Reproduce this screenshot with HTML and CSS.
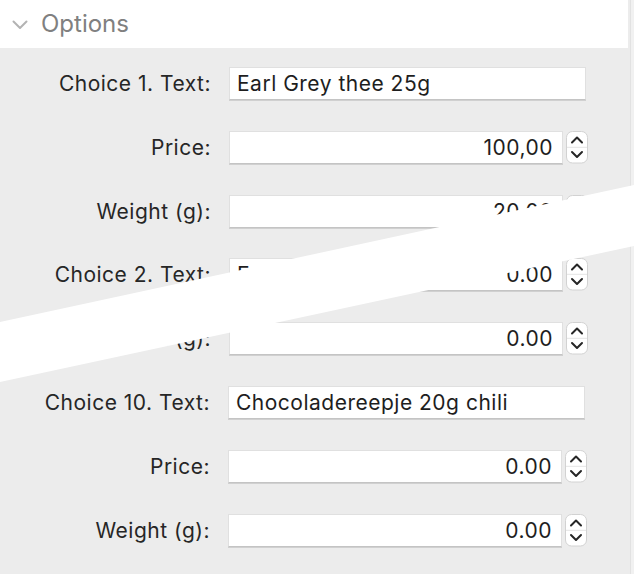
FILE: index.html
```html
<!DOCTYPE html>
<html>
<head>
<meta charset="utf-8">
<link rel="stylesheet" href="styles.css">
</head>
<body>
<div class="window">
  <div class="header">
    <svg class="chev" width="16" height="10" viewBox="0 0 16 10"><polyline points="1.5,1.5 8,8 14.5,1.5" fill="none" stroke="#b3b3b3" stroke-width="2" stroke-linecap="round" stroke-linejoin="round"/></svg>
    <span class="title">Options</span>
  </div>
  <div class="panel">
    <div class="row">
      <span class="lbl">Choice 1. Text:</span>
      <div class="field text">Earl Grey thee 25g</div>
    </div>
    <div class="row">
      <span class="lbl">Price:</span>
      <div class="field num">100,00</div>
      <div class="stepper"><svg width="22" height="33" viewBox="0 0 22 33"><rect x="0.5" y="0.5" width="21" height="31.5" rx="6" fill="#fff" stroke="#d2d2d2"/><line x1="1" y1="16.3" x2="21" y2="16.3" stroke="#e4e4e4"/><polyline points="6,11.5 11,6.5 16,11.5" fill="none" stroke="#262626" stroke-width="2" stroke-linecap="round" stroke-linejoin="round"/><polyline points="6,21 11,26 16,21" fill="none" stroke="#262626" stroke-width="2" stroke-linecap="round" stroke-linejoin="round"/></svg></div>
    </div>
    <div class="row">
      <span class="lbl">Weight (g):</span>
      <div class="field num">20,00</div>
      <div class="stepper"><svg width="22" height="33" viewBox="0 0 22 33"><rect x="0.5" y="0.5" width="21" height="31.5" rx="6" fill="#fff" stroke="#d2d2d2"/><line x1="1" y1="16.3" x2="21" y2="16.3" stroke="#e4e4e4"/><polyline points="6,11.5 11,6.5 16,11.5" fill="none" stroke="#262626" stroke-width="2" stroke-linecap="round" stroke-linejoin="round"/><polyline points="6,21 11,26 16,21" fill="none" stroke="#262626" stroke-width="2" stroke-linecap="round" stroke-linejoin="round"/></svg></div>
    </div>
    <div class="row">
      <span class="lbl">Choice 2. Text:</span>
      <div class="field num split"><span>E</span><span>0.00</span></div>
      <div class="stepper"><svg width="22" height="33" viewBox="0 0 22 33"><rect x="0.5" y="0.5" width="21" height="31.5" rx="6" fill="#fff" stroke="#d2d2d2"/><line x1="1" y1="16.3" x2="21" y2="16.3" stroke="#e4e4e4"/><polyline points="6,11.5 11,6.5 16,11.5" fill="none" stroke="#262626" stroke-width="2" stroke-linecap="round" stroke-linejoin="round"/><polyline points="6,21 11,26 16,21" fill="none" stroke="#262626" stroke-width="2" stroke-linecap="round" stroke-linejoin="round"/></svg></div>
    </div>
    <div class="row">
      <span class="lbl">Weight (g):</span>
      <div class="field num">0.00</div>
      <div class="stepper"><svg width="22" height="33" viewBox="0 0 22 33"><rect x="0.5" y="0.5" width="21" height="31.5" rx="6" fill="#fff" stroke="#d2d2d2"/><line x1="1" y1="16.3" x2="21" y2="16.3" stroke="#e4e4e4"/><polyline points="6,11.5 11,6.5 16,11.5" fill="none" stroke="#262626" stroke-width="2" stroke-linecap="round" stroke-linejoin="round"/><polyline points="6,21 11,26 16,21" fill="none" stroke="#262626" stroke-width="2" stroke-linecap="round" stroke-linejoin="round"/></svg></div>
    </div>
    <div class="row shift">
      <span class="lbl">Choice 10. Text:</span>
      <div class="field text">Chocoladereepje 20g chili</div>
    </div>
    <div class="row shift">
      <span class="lbl">Price:</span>
      <div class="field num">0.00</div>
      <div class="stepper"><svg width="22" height="33" viewBox="0 0 22 33"><rect x="0.5" y="0.5" width="21" height="31.5" rx="6" fill="#fff" stroke="#d2d2d2"/><line x1="1" y1="16.3" x2="21" y2="16.3" stroke="#e4e4e4"/><polyline points="6,11.5 11,6.5 16,11.5" fill="none" stroke="#262626" stroke-width="2" stroke-linecap="round" stroke-linejoin="round"/><polyline points="6,21 11,26 16,21" fill="none" stroke="#262626" stroke-width="2" stroke-linecap="round" stroke-linejoin="round"/></svg></div>
    </div>
    <div class="row shift">
      <span class="lbl">Weight (g):</span>
      <div class="field num">0.00</div>
      <div class="stepper"><svg width="22" height="33" viewBox="0 0 22 33"><rect x="0.5" y="0.5" width="21" height="31.5" rx="6" fill="#fff" stroke="#d2d2d2"/><line x1="1" y1="16.3" x2="21" y2="16.3" stroke="#e4e4e4"/><polyline points="6,11.5 11,6.5 16,11.5" fill="none" stroke="#262626" stroke-width="2" stroke-linecap="round" stroke-linejoin="round"/><polyline points="6,21 11,26 16,21" fill="none" stroke="#262626" stroke-width="2" stroke-linecap="round" stroke-linejoin="round"/></svg></div>
    </div>
  </div>
  <svg class="tear" width="634" height="574" viewBox="0 0 634 574"><polygon points="0,322 634,185 634,246 0,382" fill="#ffffff"/></svg>
</div>
</body>
</html>
```

FILE: styles.css
```css
html, body {
  margin: 0;
  padding: 0;
  background: #f1f1f1;
}
body {
  width: 634px;
  height: 574px;
  overflow: hidden;
  font-family: Inter, "Liberation Sans", sans-serif;
}
.window {
  position: relative;
  width: 630px;
  height: 574px;
  background: #ececec;
  border-right: 1px solid #e2e2e2;
}
.header {
  width: 628px;
  height: 48px;
  background: #ffffff;
  display: flex;
  align-items: center;
}
.chev {
  margin-left: 12px;
  margin-right: 13px;
  margin-top: 2px;
}
.title {
  font-size: 24px;
  color: #808080;
  margin-top: -1px;
}
.panel {
  display: flex;
  flex-direction: column;
  gap: 30.8px;
  padding-top: 19px;
}
.row {
  display: flex;
  align-items: center;
  height: 33px;
}
.shift {
  margin-left: -1px;
}
.lbl {
  width: 211px;
  text-align: right;
  font-size: 21px;
  letter-spacing: 0.5px;
  color: #262626;
  margin-right: 18px;
  flex: none;
}
.field {
  box-sizing: border-box;
  height: 33px;
  background: #ffffff;
  border: 1px solid #e0e0e0;
  border-bottom: 1px solid #c4c4c4;
  box-shadow: 0 1px 0 #d0d0d0;
  font-size: 21px;
  letter-spacing: 0.5px;
  color: #1e1e1e;
  display: flex;
  align-items: center;
  flex: none;
}
.text {
  width: 357px;
  padding-left: 7px;
}
.num {
  width: 334px;
  justify-content: flex-end;
  padding-right: 9px;
}
.split {
  justify-content: space-between;
  padding-left: 7px;
}
.stepper {
  margin-left: 3px;
  width: 22px;
  height: 33px;
  flex: none;
}
.stepper svg {
  display: block;
}
.tear {
  position: absolute;
  left: 0;
  top: 0;
}
```
